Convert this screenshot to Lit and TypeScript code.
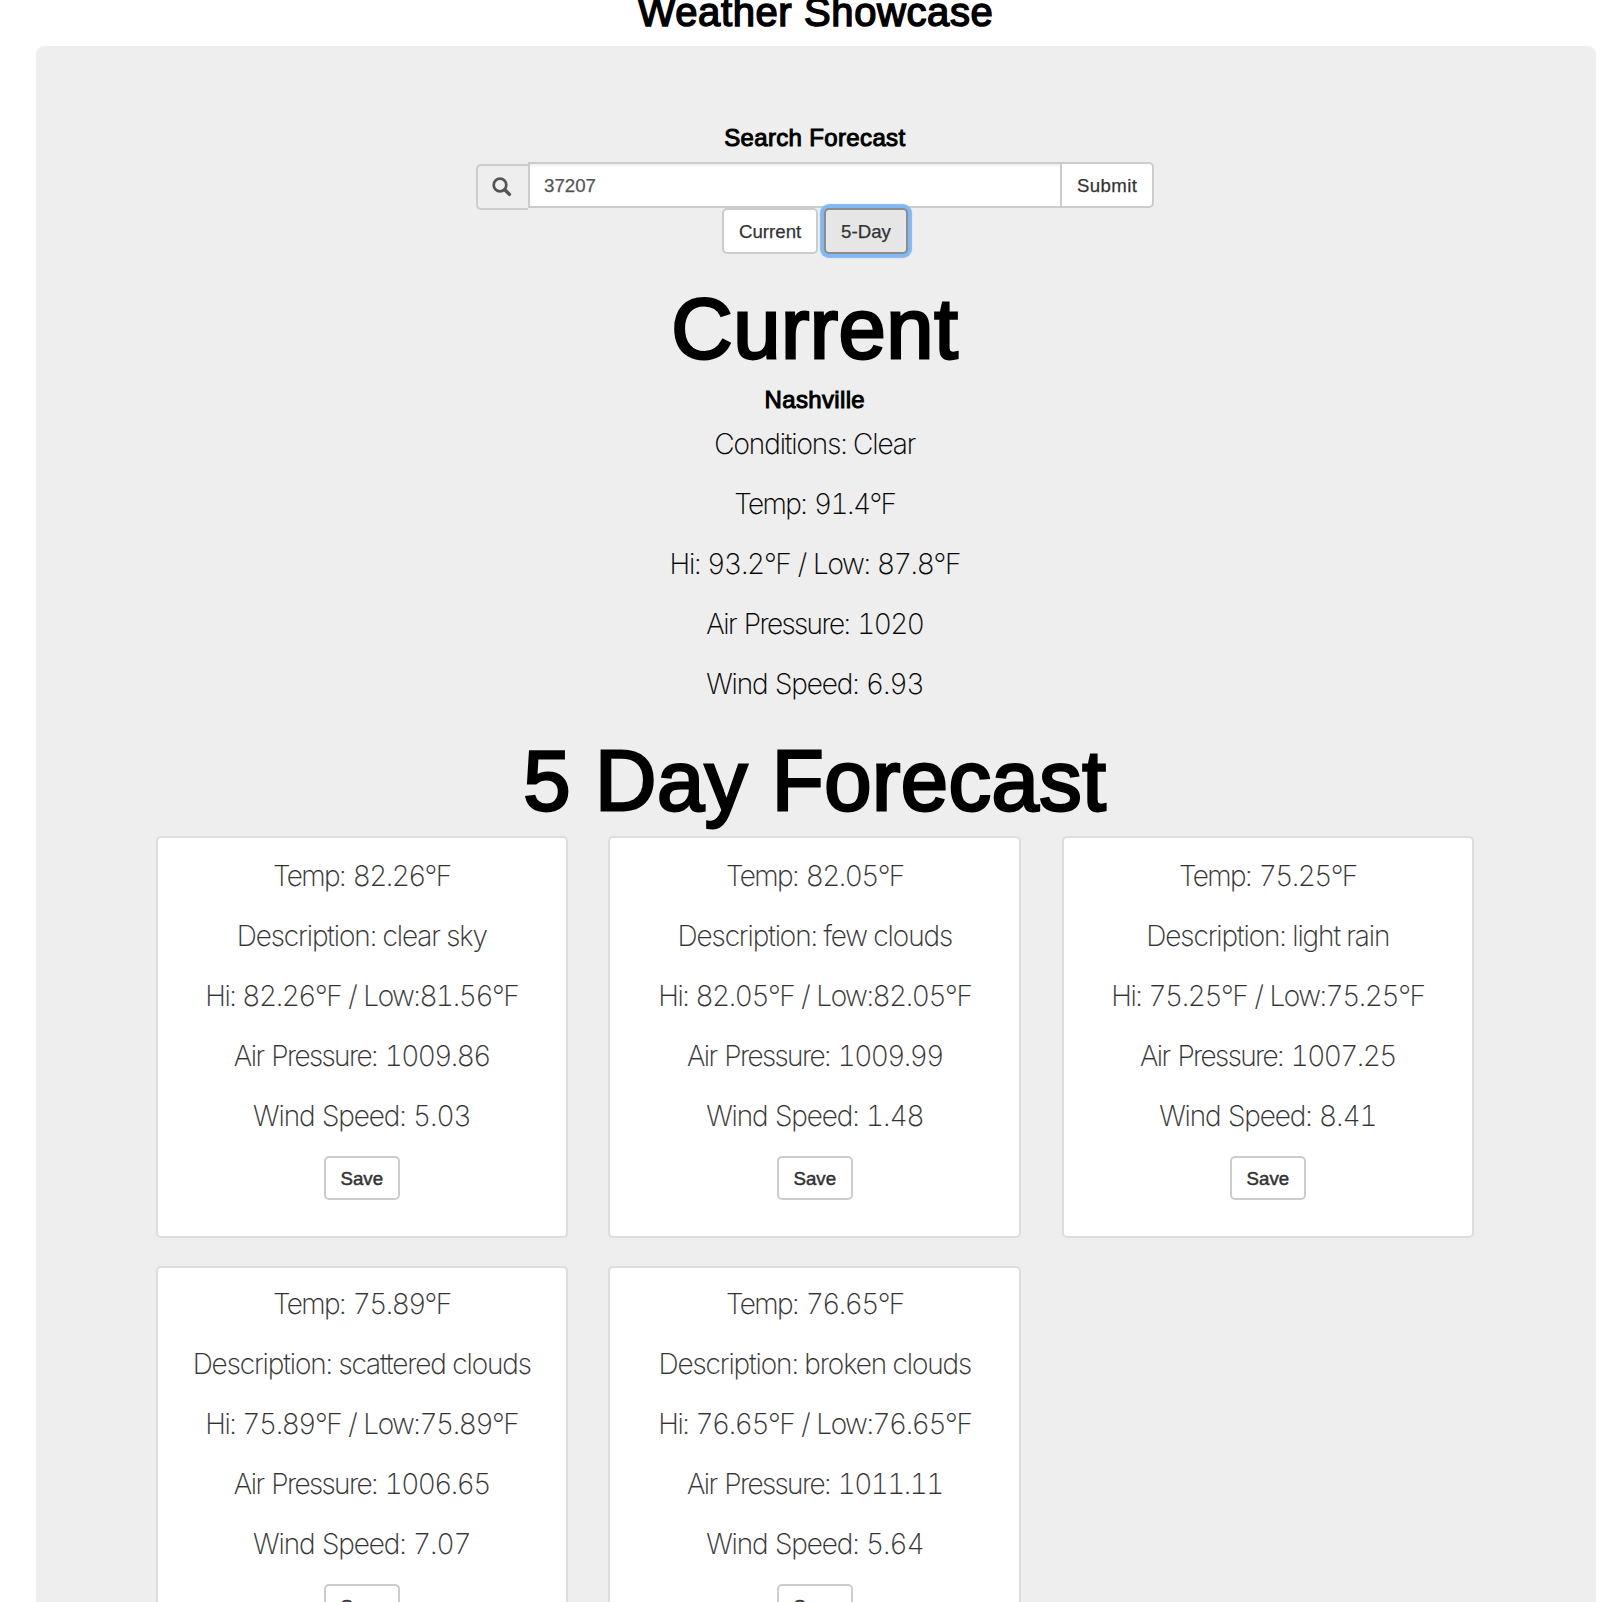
import { LitElement, html, css } from "lit";

type Kind = "text" | "temp" | "range" | "pair" | "pressure" | "wind";

interface Line {
  kind: Kind;
  text: string;
}

interface Day {
  temp: string;
  description: string;
  hi: string;
  low: string;
  pressure: string;
  wind: string;
}

const current: Line[] = [
  { kind: "text", text: "Conditions: Clear" },
  { kind: "temp", text: "Temp: 91.4°F" },
  { kind: "pair", text: "Hi: 93.2°F / Low: 87.8°F" },
  { kind: "pressure", text: "Air Pressure: 1020" },
  { kind: "wind", text: "Wind Speed: 6.93" },
];

const days: Day[] = [
  { temp: "82.26", description: "clear sky", hi: "82.26", low: "81.56", pressure: "1009.86", wind: "5.03" },
  { temp: "82.05", description: "few clouds", hi: "82.05", low: "82.05", pressure: "1009.99", wind: "1.48" },
  { temp: "75.25", description: "light rain", hi: "75.25", low: "75.25", pressure: "1007.25", wind: "8.41" },
  { temp: "75.89", description: "scattered clouds", hi: "75.89", low: "75.89", pressure: "1006.65", wind: "7.07" },
  { temp: "76.65", description: "broken clouds", hi: "76.65", low: "76.65", pressure: "1011.11", wind: "5.64" },
];

const dayLines = (d: Day): Line[] => [
  { kind: "temp", text: `Temp: ${d.temp}°F` },
  { kind: "text", text: `Description: ${d.description}` },
  { kind: "range", text: `Hi: ${d.hi}°F / Low:${d.low}°F` },
  { kind: "pressure", text: `Air Pressure: ${d.pressure}` },
  { kind: "wind", text: `Wind Speed: ${d.wind}` },
];

const base = css`
  * {
    box-sizing: border-box;
    margin: 0;
  }
  .line {
    font: 200 28px/60px Inter, "Liberation Sans", sans-serif;
    font-variant-numeric: tabular-nums;
    -webkit-text-stroke: 0.15px currentColor;
    text-align: center;
    white-space: nowrap;
  }
  .text { letter-spacing: -1.08px; }
  .temp { letter-spacing: -1.6px; word-spacing: 2px; }
  .range { letter-spacing: -1.45px; word-spacing: 1px; }
  .pair { letter-spacing: -1.3px; word-spacing: 1px; }
  .pressure { letter-spacing: -1.6px; word-spacing: 2px; }
  .wind { letter-spacing: -1.1px; word-spacing: 1px; }
  .btn {
    display: block;
    height: 46px;
    padding: 1px 15px 0;
    border: 2px solid #ccc;
    border-radius: 5px;
    background: #fff;
    color: #333;
    font: 18.67px/41px "Liberation Sans", Arial, sans-serif;
    -webkit-text-stroke: 0.25px currentColor;
    text-align: center;
    white-space: nowrap;
  }
`;

class DayCard extends LitElement {
  static properties = { day: { attribute: false } };
  declare day: Day;

  static styles = [
    base,
    css`
      :host {
        display: block;
        box-sizing: border-box;
        height: 401.5px;
        padding-top: 7.5px;
        border: 2px solid #ddd;
        border-radius: 5px;
        background: #fff;
        color: #333;
      }
      .save {
        width: 76px;
        height: 44px;
        margin: 10.5px auto 0;
        padding: 2px 0 0;
        line-height: 38px;
        -webkit-text-stroke-width: 0.5px;
      }
    `,
  ];

  render() {
    return html`
      ${dayLines(this.day).map((l) => html`<p class="line ${l.kind}">${l.text}</p>`)}
      <button class="btn save">Save</button>
    `;
  }
}
customElements.define("day-card", DayCard);

class AppRoot extends LitElement {
  static styles = [
    base,
    css`
      :host {
        display: block;
        height: 1602px;
        overflow: hidden;
        background: #fff;
        color: #000;
        font-family: "Liberation Sans", Arial, sans-serif;
      }
      .title,
      .label,
      .display {
        font-weight: 400;
        text-align: center;
        -webkit-text-stroke-color: currentColor;
      }
      .title {
        margin: -10px 4px 12px 35px;
        font-size: 40px;
        line-height: 44px;
        letter-spacing: 0.6px;
        -webkit-text-stroke-width: 1.5px;
      }
      .panel {
        height: 1700px;
        margin: 0 4px 0 36px;
        padding: 79px 122.4px 0 120px;
        border-radius: 8px;
        background: #eee;
      }
      .label {
        font-size: 24px;
        line-height: 26px;
        letter-spacing: 0.35px;
        -webkit-text-stroke-width: 1px;
      }
      .city {
        margin-top: 11.5px;
        line-height: 27px;
      }
      .display {
        font-size: 85px;
        line-height: 92px;
        letter-spacing: 0.5px;
        -webkit-text-stroke-width: 2.8px;
      }
      .now {
        margin-top: 28.5px;
      }
      .current {
        padding-top: 1px;
      }
      .week {
        margin: 20.5px 0 9.5px;
      }
      .search {
        display: flex;
        align-items: flex-start;
        width: 678px;
        height: 46px;
        margin: 11px 0 0 320px;
      }
      .addon {
        display: flex;
        align-items: center;
        justify-content: center;
        width: 52px;
        height: 46px;
        margin-top: 2px;
        border: 2px solid #ccc;
        border-right: 0;
        border-radius: 5px 0 0 5px;
        background: #eee;
      }
      .icon {
        display: block;
        width: 20px;
        height: 20px;
        margin-right: 2px;
      }
      .field {
        flex: 1;
        min-width: 0;
        height: 46px;
        padding: 1px 14px 0;
        border: 2px solid #ccc;
        border-right: 0;
        border-radius: 0;
        outline: 0;
        background: #fff;
        box-shadow: inset 0 2px 2px rgba(0, 0, 0, 0.06);
        color: #555;
        font: 18.67px/41px "Liberation Sans", Arial, sans-serif;
        -webkit-text-stroke: 0.25px currentColor;
      }
      .submit {
        width: 94px;
        border-radius: 0 5px 5px 0;
        letter-spacing: 0.35px;
      }
      .modes {
        display: flex;
        gap: 6.5px;
        margin: 0 0 0 566px;
      }
      .mode {
        width: 95.5px;
      }
      .active {
        width: 84px;
        border-color: #8c8c8c;
        background: #e6e6e6;
        box-shadow: 0 0 1px 4px #7fb8f4;
      }
      .grid {
        display: grid;
        grid-template-columns: 411.5px 413px 411.5px;
        justify-content: space-between;
        row-gap: 28.5px;
      }
      .row-two {
        height: 399.5px;
        padding-top: 5.5px;
      }
    `,
  ];

  render() {
    return html`
      <h2 class="title">Weather Showcase</h2>
      <main class="panel">
        <h4 class="label">Search Forecast</h4>
        <div class="search">
          <span class="addon">
            <svg class="icon" viewBox="0 0 20 20" fill="none" stroke="#555">
              <circle cx="8" cy="8" r="6.3" stroke-width="2.7" />
              <path d="M12.8 12.8L17.4 17.4" stroke-width="3.4" stroke-linecap="round" />
            </svg>
          </span>
          <input class="field" type="text" .value=${"37207"} />
          <button class="btn submit">Submit</button>
        </div>
        <div class="modes">
          <button class="btn mode">Current</button>
          <button class="btn active">5-Day</button>
        </div>
        <h1 class="display now">Current</h1>
        <h4 class="label city">Nashville</h4>
        <section class="current">
          ${current.map((l) => html`<p class="line ${l.kind}">${l.text}</p>`)}
        </section>
        <h1 class="display week">5 Day Forecast</h1>
        <section class="grid">
          ${days.map((d, i) => html`<day-card class=${i > 2 ? "row-two" : "row-one"} .day=${d}></day-card>`)}
        </section>
      </main>
    `;
  }
}
customElements.define("app-root", AppRoot);
